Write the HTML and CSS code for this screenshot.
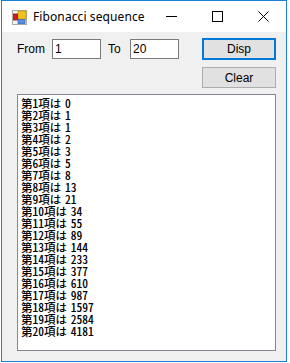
FILE: index.html
```html
<!DOCTYPE html>
<html lang="ja">
<head>
  <meta charset="UTF-8">
  <title>Fibonacci sequence</title>
  <link rel="stylesheet" href="styles.css">
</head>
<body>
<div class="window">
  <div class="titlebar">
    <svg class="app-icon" width="15" height="15" viewBox="0 0 15 15">
      <rect x="0.5" y="0.5" width="14" height="14" fill="#f4f4f4" stroke="#a8a8a8"/>
      <rect x="6" y="1" width="8" height="8" fill="#f2c21b" stroke="#c99a10" stroke-width="0.8"/>
      <rect x="1.5" y="4" width="4" height="6" fill="#c8201a" stroke="#8a1410" stroke-width="0.8"/>
      <rect x="6" y="9.5" width="7" height="4" fill="#5b8fe0" stroke="#3768b8" stroke-width="0.8"/>
    </svg>
    <span class="title">Fibonacci sequence</span>
    <div class="caption-buttons">
      <span class="cap-btn">
        <svg width="11" height="11" viewBox="0 0 11 11"><line x1="0" y1="5.5" x2="11" y2="5.5" stroke="#000" stroke-width="1"/></svg>
      </span>
      <span class="cap-btn">
        <svg width="11" height="11" viewBox="0 0 11 11"><rect x="0.5" y="0.5" width="10" height="10" fill="none" stroke="#000" stroke-width="1"/></svg>
      </span>
      <span class="cap-btn">
        <svg width="11" height="11" viewBox="0 0 11 11"><path d="M0.5 0.5 L10.5 10.5 M10.5 0.5 L0.5 10.5" stroke="#000" stroke-width="1"/></svg>
      </span>
    </div>
  </div>
  <div class="client">
    <div class="row">
      <label class="lbl lbl-from" for="from">From</label>
      <input class="textbox" id="from" type="text" value="1">
      <label class="lbl lbl-to" for="to">To</label>
      <input class="textbox" id="to" type="text" value="20">
      <button class="btn btn-default">Disp</button>
    </div>
    <div class="row row-clear">
      <button class="btn">Clear</button>
    </div>
    <div class="listbox">
      <div class="item">第1項は 0</div>
      <div class="item">第2項は 1</div>
      <div class="item">第3項は 1</div>
      <div class="item">第4項は 2</div>
      <div class="item">第5項は 3</div>
      <div class="item">第6項は 5</div>
      <div class="item">第7項は 8</div>
      <div class="item">第8項は 13</div>
      <div class="item">第9項は 21</div>
      <div class="item">第10項は 34</div>
      <div class="item">第11項は 55</div>
      <div class="item">第12項は 89</div>
      <div class="item">第13項は 144</div>
      <div class="item">第14項は 233</div>
      <div class="item">第15項は 377</div>
      <div class="item">第16項は 610</div>
      <div class="item">第17項は 987</div>
      <div class="item">第18項は 1597</div>
      <div class="item">第19項は 2584</div>
      <div class="item">第20項は 4181</div>
    </div>
  </div>
</div>
</body>
</html>
```
FILE: styles.css
```css
body {
  margin: 0;
  background: #fff;
  font-family: "Noto Sans", "Liberation Sans", sans-serif;
  font-size: 12px;
  color: #000;
}
.window {
  margin: 0 0 0 1px;
  width: 286px;
  height: 362px;
  box-sizing: border-box;
  border: 1px solid #1c7fd6;
  display: flex;
  flex-direction: column;
}
.titlebar {
  height: 31px;
  flex: none;
  background: #fff;
  display: flex;
  align-items: center;
}
.app-icon {
  margin-left: 10px;
  margin-top: 1px;
}
.title {
  margin-left: 6px;
  font-size: 12px;
  letter-spacing: 0.1px;
}
.caption-buttons {
  margin-left: auto;
  display: flex;
  height: 100%;
}
.cap-btn {
  width: 46px;
  display: flex;
  align-items: center;
  justify-content: center;
}
.client {
  flex: 1;
  background: #f0f0f0;
  padding: 6px 10px 10px 15px;
  display: flex;
  flex-direction: column;
}
.row {
  display: flex;
  align-items: center;
  height: 22px;
}
.lbl {
  font-family: "Liberation Sans", sans-serif;
  font-size: 12px;
}
.lbl-from {
  width: 35px;
}
.lbl-to {
  width: 22px;
  margin-left: 7px;
}
.textbox {
  box-sizing: border-box;
  width: 49px;
  height: 20px;
  margin: 0;
  padding: 0 2px;
  border: 1px solid #7a7a7a;
  background: #fff;
  font-family: "Liberation Sans", sans-serif;
  font-size: 12px;
  color: #000;
  outline: none;
}
.btn {
  margin: 0 0 0 auto;
  box-sizing: border-box;
  width: 74px;
  height: 21px;
  padding: 0;
  background: #e1e1e1;
  border: 1px solid #adadad;
  font-family: "Liberation Sans", sans-serif;
  font-size: 12px;
  color: #000;
}
.btn-default {
  height: 22px;
  border: 2px solid #0078d7;
}
.row-clear {
  margin-top: 7px;
  height: 21px;
}
.listbox {
  margin-top: 6px;
  box-sizing: border-box;
  width: 259px;
  height: 257px;
  background: #fff;
  border: 1px solid #828790;
  padding: 2px 3px;
  font-family: "Noto Sans CJK JP", sans-serif;
  font-feature-settings: "hwid" 1;
  font-size: 11.5px;
  font-weight: 500;
  word-spacing: -2px;
}
.item {
  height: 12px;
  line-height: 12px;
  white-space: nowrap;
}
```
